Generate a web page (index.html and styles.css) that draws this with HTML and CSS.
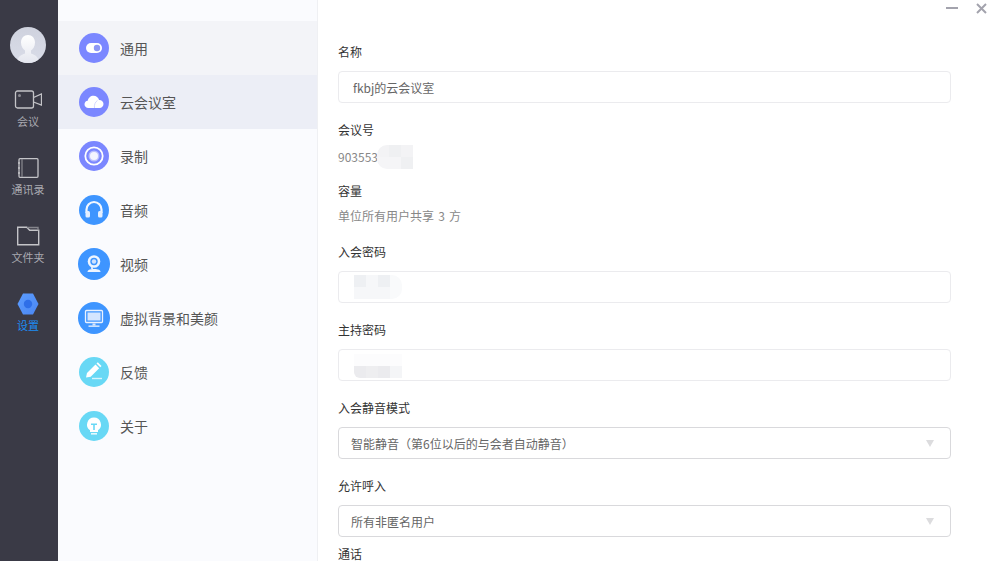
FILE: index.html
```html
<!DOCTYPE html>
<html lang="zh-CN">
<head>
<meta charset="utf-8">
<title>设置</title>
<link rel="stylesheet" href="styles.css">
</head>
<body>
<div class="app">
  <aside class="rail">
    <svg class="avatar" width="36" height="36" viewBox="0 0 36 36">
      <defs>
        <clipPath id="avc"><circle cx="18" cy="18" r="18"/></clipPath>
        <linearGradient id="avg" x1="0" y1="0" x2="0" y2="1"><stop offset="0" stop-color="#cfd2de"/><stop offset="1" stop-color="#d9dce8"/></linearGradient>
        <linearGradient id="avb" x1="0" y1="0" x2="0" y2="1"><stop offset="0" stop-color="#ffffff"/><stop offset="1" stop-color="#e4e6ef"/></linearGradient>
      </defs>
      <g clip-path="url(#avc)">
        <rect width="36" height="36" fill="url(#avg)"/>
        <path d="M7 36c0-6 4-8 8-9.500l0-3c-2-1.500-4-4-4-8 0-4.500 3-7.500 7-7.500s7 3 7 7.500c0 4-2 6.500-4 8l0 3c4 1.500 8 3.500 8 9.500z" fill="url(#avb)"/>
      </g>
    </svg>
    <nav class="rail-nav">
      <a class="rail-item">
        <svg width="28" height="20" viewBox="0 0 28 20" fill="none" stroke="#c4c4c8" stroke-width="1.300"><rect x="1.500" y="1" width="18" height="17" rx="2"/><path d="M19.500 7.500l8-3.500v11l-8-3"/><circle cx="5.500" cy="5.500" r="1.500" fill="#8a8a92" stroke="none"/></svg>
        <span>会议</span>
      </a>
      <a class="rail-item">
        <svg width="28" height="20" viewBox="0 0 28 20" fill="none" stroke="#c4c4c8" stroke-width="1.300"><rect x="5" y="0.700" width="19" height="18.600" rx="1"/><path d="M8 1v18" stroke="#85858c"/><path d="M4 5h2M4 10h2M4 15h2" stroke-width="1.500"/></svg>
        <span>通讯录</span>
      </a>
      <a class="rail-item">
        <svg width="28" height="20" viewBox="0 0 28 20" fill="none" stroke="#c4c4c8" stroke-width="1.400"><path d="M3.700 18.800V1.200h9l3 3h9v14.600z"/><path d="M13 1.500h11v2.800" stroke="#85858c"/></svg>
        <span>文件夹</span>
      </a>
      <a class="rail-item rail-item-active">
        <svg width="28" height="22" viewBox="0 0 28 22"><defs><linearGradient id="hex" x1="0" y1="0" x2="1" y2="1"><stop offset="0" stop-color="#5c9dff"/><stop offset="1" stop-color="#4a86f2"/></linearGradient></defs><path d="M9 0.500h10l5.500 10.500L19 21.500H9L3.500 11z" fill="url(#hex)"/><circle cx="14" cy="11" r="4.200" fill="#2f6fe8"/></svg>
        <span>设置</span>
      </a>
    </nav>
  </aside>

  <section class="menu">
    <div class="menu-item menu-item-hover">
      <svg class="mi" width="30" height="30" viewBox="0 0 30 30"><circle cx="15" cy="15" r="15" fill="#7b87ff"/><rect x="7" y="10" width="16" height="10" rx="5" fill="#fff"/><circle cx="18" cy="15" r="3.200" fill="#8d97f5"/></svg>
      <span>通用</span>
    </div>
    <div class="menu-item menu-item-selected">
      <svg class="mi" width="30" height="30" viewBox="0 0 30 30"><circle cx="15" cy="15" r="15" fill="#7b87ff"/><path d="M9.500 21c-2.500 0-4-1.700-4-3.700 0-2 1.400-3.400 3.200-3.600.5-2.900 2.900-5 5.800-5 2.700 0 4.900 1.700 5.600 4.300 2.600-.1 4.400 1.800 4.400 4 0 2.300-1.700 4-4 4z" fill="#fff"/><path d="M15.500 21c-.5-3 .5-6 3-7.500" fill="none" stroke="#d5d9ff" stroke-width="1"/></svg>
      <span>云会议室</span>
    </div>
    <div class="menu-item">
      <svg class="mi" width="30" height="30" viewBox="0 0 30 30"><circle cx="15" cy="15" r="15" fill="#7b87ff"/><circle cx="15" cy="15" r="8.700" fill="none" stroke="#fff" stroke-width="1.800"/><circle cx="15" cy="15" r="5.500" fill="#b9bfff"/><circle cx="15" cy="15" r="4" fill="#f4f5ff"/></svg>
      <span>录制</span>
    </div>
    <div class="menu-item">
      <svg class="mi" width="30" height="30" viewBox="0 0 30 30"><circle cx="15" cy="15" r="15" fill="#3e95ff"/><path d="M7.500 18v-3.500a7.500 7.500 0 0 1 15 0V18" fill="none" stroke="#f2f7ff" stroke-width="2.200"/><rect x="6.500" y="16" width="4.500" height="6.500" rx="1.500" fill="#e4efff"/><rect x="19" y="16" width="4.500" height="6.500" rx="1.500" fill="#e4efff"/></svg>
      <span>音频</span>
    </div>
    <div class="menu-item menu-item-big">
      <svg class="mi" width="32" height="32" viewBox="0 0 32 32"><circle cx="16" cy="16" r="16" fill="#3e95ff"/><circle cx="16" cy="13.500" r="6.300" fill="#eef5ff"/><circle cx="16" cy="13.500" r="3.700" fill="#3e95ff"/><circle cx="16" cy="13.500" r="2.200" fill="#cfe2ff"/><path d="M14 19v2" stroke="#d7e7ff" stroke-width="2"/><path d="M9.500 24c0-2 2-3 6.500-3s6.500 1 6.500 3z" fill="#eef5ff"/></svg>
      <span>视频</span>
    </div>
    <div class="menu-item menu-item-big">
      <svg class="mi" width="32" height="32" viewBox="0 0 32 32"><circle cx="16" cy="16" r="16" fill="#3e95ff"/><rect x="7.500" y="8.500" width="17" height="12" rx="1" fill="#3e95ff" stroke="#eaf2ff" stroke-width="1.300"/><rect x="9.500" y="10.500" width="13" height="8" fill="#d4e5ff"/><path d="M14.500 21.500h3v2h-3z" fill="#d4e5ff"/><path d="M10.500 23.500h11v1.300h-11z" fill="#eef5ff"/></svg>
      <span>虚拟背景和美颜</span>
    </div>
    <div class="menu-item">
      <svg class="mi" width="30" height="30" viewBox="0 0 30 30"><circle cx="15" cy="15" r="15" fill="#68d8f5"/><path d="M7 20.500l1-4.500 8.500-8.500 3.700 3.700L11.700 19.700z" fill="#fff"/><path d="M17.500 6.500l1.300-1.200 3.700 3.700-1.200 1.300z" fill="#fff"/><rect x="13" y="20.800" width="10" height="1.400" fill="#d8f5fd"/></svg>
      <span>反馈</span>
    </div>
    <div class="menu-item">
      <svg class="mi" width="30" height="30" viewBox="0 0 30 30"><circle cx="15" cy="15" r="15" fill="#68d8f5"/><path d="M15 6.500a7 7 0 0 0-4 12.700V21h8v-1.800a7 7 0 0 0-4-12.700z" fill="#fff"/><path d="M12 12.500h6v1.500h-2.200v5h-1.600v-5H12z" fill="#68d8f5"/><rect x="12" y="22" width="6" height="1.600" fill="#e6f9fe"/></svg>
      <span>关于</span>
    </div>
  </section>

  <main class="content">
    <div class="win-controls">
      <span class="win-min"></span>
      <svg width="11" height="11" viewBox="0 0 11 11"><path d="M1 1l9 9M10 1l-9 9" stroke="#a3a3ad" stroke-width="2"/></svg>
    </div>

    <div class="field field-first">
      <div class="label">名称</div>
      <div class="box box-input">fkbj的云会议室</div>
    </div>

    <div class="field field-static">
      <div class="label">会议号</div>
      <div class="value value-id">903553<span class="mosaic mosaic-id"><i class="m1"></i><i class="m2"></i><i class="m1"></i><i class="m3"></i><i class="m3"></i><i class="m2"></i></span></div>
    </div>

    <div class="field field-cap">
      <div class="label">容量</div>
      <div class="value">单位所有用户共享 3 方</div>
    </div>

    <div class="field field-pass">
      <div class="label">入会密码</div>
      <div class="box box-input box-mosaic"><span class="mosaic mosaic-a"><i class="a1"></i><i class="a2"></i><i class="a1"></i><i class="a3"></i><i class="a2"></i><i class="a2"></i><i class="a2"></i><i class="a3"></i></span></div>
    </div>

    <div class="field field-next">
      <div class="label">主持密码</div>
      <div class="box box-input box-mosaic"><span class="mosaic mosaic-b"><i class="b0"></i><i class="b0"></i><i class="b0"></i><i class="b0"></i><i class="b1"></i><i class="b2"></i><i class="b1"></i><i class="b3"></i></span></div>
    </div>

    <div class="field field-next">
      <div class="label">入会静音模式</div>
      <div class="box box-select"><span>智能静音（第6位以后的与会者自动静音）</span><b class="caret"></b></div>
    </div>

    <div class="field field-next">
      <div class="label">允许呼入</div>
      <div class="box box-select"><span>所有非匿名用户</span><b class="caret"></b></div>
    </div>

    <div class="field field-last">
      <div class="label">通话</div>
    </div>
  </main>
</div>
</body>
</html>
```

FILE: styles.css
```css
* { box-sizing: border-box; }
html, body { margin: 0; height: 100%; overflow: hidden; background: #fff; }
body { font-family: "Noto Sans CJK SC", "Liberation Sans", sans-serif; font-size: 12px; color: #333; }
.app { display: flex; width: 991px; height: 561px; overflow: hidden; }

.rail { width: 58px; flex: none; background: #3a3a46; display: flex; flex-direction: column; align-items: center; padding: 27px 2px 0 0; }
.avatar { display: block; flex: none; }
.rail-nav { display: flex; flex-direction: column; margin-top: 27px; }
.rail-item { height: 68px; display: flex; flex-direction: column; align-items: center; color: #a9a9b0; line-height: 16px; font-size: 11px; }
.rail-item svg { display: block; flex: none; height: 20px; margin-bottom: 3px; }
.rail-item-active { color: #1c8cf5; }
.rail-item-active svg { height: 22px; margin: -1px 0 2px; }

.menu { width: 260px; flex: none; background: #fafbfe; border-right: 1px solid #eff0f3; padding-top: 21px; }
.menu-item { height: 54px; display: flex; align-items: center; padding-left: 21px; gap: 11px; font-size: 14px; color: #555; }
.menu-item-big { padding-left: 20px; gap: 10px; }
.menu-item .mi { display: block; flex: none; }
.menu-item-hover { background: #f3f4f8; }
.menu-item-selected { background: #eceef6; }

.content { flex: 1; min-width: 0; padding: 0 40px 0 20px; display: flex; flex-direction: column; }
.win-controls { height: 44px; flex: none; display: flex; justify-content: flex-end; gap: 18px; align-items: flex-start; padding-top: 3px; margin-right: -36px; }
.win-min { width: 12px; height: 2px; background: #a3a3ad; margin-top: 4px; }

.field { flex: none; }
.label { font-size: 12px; line-height: 16px; color: #333; }
.value { font-size: 12px; line-height: 16px; color: #888; word-spacing: 1.500px; }
.box { width: 613px; height: 32px; border-radius: 4px; background: #fff; font-size: 12px; display: flex; align-items: center; }
.box-input { border: 1px solid #ebebee; padding-left: 14px; color: #666; margin-top: 11px; }
.box-select { border: 1px solid #d9d9dc; padding: 0 16px 0 12px; color: #666; justify-content: space-between; margin-top: 11px; }
.caret { width: 0; height: 0; border-left: 4px solid transparent; border-right: 4px solid transparent; border-top: 7px solid #dcdcde; }

.field-static { margin-top: 19px; }
.value-id { display: flex; align-items: center; margin-top: 11px; height: 16px; }
.field-cap { margin-top: 18px; }
.field-cap .value { margin-top: 9px; }
.field-pass { margin-top: 20px; }
.field-next { margin-top: 19px; }
.field-last { margin-top: 9px; }

.mosaic { display: inline-grid; flex: none; grid-auto-rows: 12px; }
.mosaic i { display: block; }
.mosaic-id { grid-template-columns: repeat(3, 12px); border-radius: 10px 0 0 10px; overflow: hidden; margin-left: -1px; }
.mosaic-a { grid-template-columns: repeat(4, 12px); margin-left: 1px; border-radius: 0 10px 10px 0; overflow: hidden; }
.mosaic-b { grid-template-columns: repeat(4, 12px); margin-left: 1px; border-radius: 0 0 0 6px; overflow: hidden; margin-top: 2px; }
.m1 { background: #f3f3f5; }
.m2 { background: #eff0f2; }
.m3 { background: #f5f5f7; }
.a1 { background: #eef0f3; }
.a2 { background: #f6f7f9; }
.a3 { background: #f9fafb; }
.b0 { background: #fcfcfd; }
.b1 { background: #ebebee; }
.b2 { background: #eeeef0; }
.b3 { background: #f4f5f7; }
```
